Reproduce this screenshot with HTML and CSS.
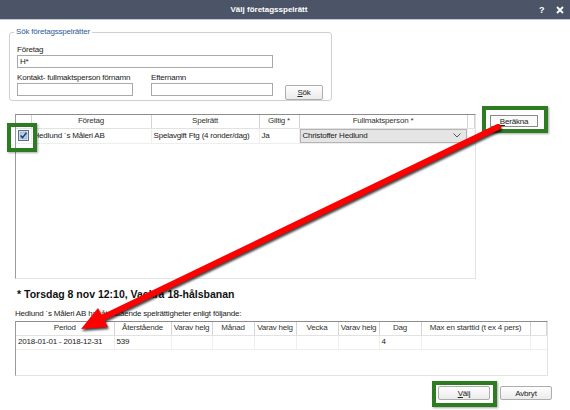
FILE: index.html
```html
<!DOCTYPE html>
<html lang="sv">
<head>
<meta charset="utf-8">
<title>Välj företagsspelrätt</title>
<link rel="stylesheet" href="styles.css">
</head>
<body>
<div class="titlebar">
  <div class="title">Välj företagsspelrätt</div>
  <div class="tb-btns">
    <span class="tb-help">?</span>
    <svg class="tb-close" width="8" height="8" viewBox="0 0 8 8"><path d="M1 1L7 7M7 1L1 7" stroke="#fff" stroke-width="1.8"/></svg>
  </div>
</div>

<fieldset class="search">
  <legend>Sök företagsspelrätter</legend>
  <div class="search-grid">
    <label class="lbl lbl-co">Företag</label>
    <div class="input in-co">H*</div>
    <label class="lbl lbl-fn">Kontakt- fullmaktsperson förnamn</label>
    <label class="lbl lbl-ln">Efternamn</label>
    <div class="input in-fn"></div>
    <div class="input in-ln"></div>
    <button class="btn sok"><u>S</u>ök</button>
  </div>
</fieldset>

<div class="top-area">
  <div class="grid-wrap top-grid">
    <table class="grid">
      <colgroup>
        <col style="width:15px"><col style="width:120px"><col style="width:108px"><col style="width:40px"><col style="width:168px"><col>
      </colgroup>
      <thead>
        <tr><th></th><th>Företag</th><th>Spelrätt</th><th>Giltig *</th><th>Fullmaktsperson *</th><th></th></tr>
      </thead>
      <tbody>
        <tr>
          <td class="cb-cell">
            <svg class="cb" width="11" height="11" viewBox="0 0 11 11">
              <rect x="0.5" y="0.5" width="10" height="10" fill="#f4f4f4" stroke="#5d6f8a"/>
              <rect x="2" y="2" width="7" height="7" fill="#b9d1ea" stroke="#7e9fc6" stroke-width="0.6"/>
              <path d="M2.6 5.4L4.6 7.6L8.4 2.8" fill="none" stroke="#1b3c73" stroke-width="1.5"/>
            </svg>
          </td>
          <td>Hedlund ´s Måleri AB</td>
          <td>Spelavgift Ftg (4 ronder/dag)</td>
          <td>Ja</td>
          <td class="combo-cell">
            <div class="combo">
              <span>Christoffer Hedlund</span>
              <svg width="8" height="5" viewBox="0 0 8 5"><path d="M0.5 0.5L4 4L7.5 0.5" fill="none" stroke="#555" stroke-width="1"/></svg>
            </div>
          </td>
          <td></td>
        </tr>
      </tbody>
    </table>
  </div>
  <button class="btn berakna"><u>B</u>eräkna</button>
</div>

<h2 class="slot">* Torsdag 8 nov 12:10, Vackra 18-hålsbanan</h2>
<p class="info">Hedlund ´s Måleri AB har återstående spelrättigheter enligt följande:</p>

<div class="grid-wrap bottom-grid">
  <table class="grid">
    <colgroup>
      <col style="width:98px"><col style="width:57px"><col style="width:41px"><col style="width:42px"><col style="width:42px"><col style="width:42px"><col style="width:41px"><col style="width:42px"><col style="width:109px"><col>
    </colgroup>
    <thead>
      <tr><th>Period</th><th>Återstående</th><th>Varav helg</th><th>Månad</th><th>Varav helg</th><th>Vecka</th><th>Varav helg</th><th>Dag</th><th>Max en starttid (t ex 4 pers)</th><th></th></tr>
    </thead>
    <tbody>
      <tr><td>2018-01-01 - 2018-12-31</td><td>539</td><td></td><td></td><td></td><td></td><td></td><td>4</td><td></td><td class="blank"></td></tr>
    </tbody>
  </table>
</div>

<div class="actions">
  <button class="btn act"><u>V</u>älj</button>
  <button class="btn act">Avbryt</button>
</div>

<div class="hl hl-cb"></div>
<div class="hl hl-ber"></div>
<div class="hl hl-valj"></div>

<svg class="arrow" width="570" height="410" viewBox="0 0 570 410">
  <line x1="498" y1="127" x2="100" y2="319" stroke="#ff0000" stroke-width="6" stroke-linecap="round"/>
  <polygon points="81,329 108,327 98,308" fill="#ff0000"/>
</svg>
</body>
</html>
```

FILE: styles.css
```css
* { box-sizing: border-box; }

body {
  margin: 0;
  width: 570px;
  height: 410px;
  overflow: hidden;
  position: relative;
  background: #ffffff;
  font-family: "Liberation Sans", Arial, sans-serif;
  font-size: 8px;
  letter-spacing: -0.2px;
  color: #222;
}

.titlebar {
  height: 20px;
  background: #4b5567;
  border-bottom: 1px solid #c3cad3;
  display: flex;
  align-items: center;
  color: #fff;
}

.title {
  flex: 1;
  text-align: center;
  font-weight: bold;
  font-size: 8px;
  letter-spacing: 0;
  padding-left: 2px;
}

.tb-btns {
  width: 34px;
  display: flex;
  align-items: center;
  gap: 12px;
  padding-left: 3px;
}

.tb-help {
  font-weight: bold;
  font-size: 9px;
}

.search {
  margin: 6px 0 0 9px;
  width: 323px;
  border: 1px solid #cfcfcf;
  border-radius: 3px;
  padding: 6px 7px 4px 7px;
}

.search legend {
  color: #2f5b9a;
  padding: 0 2px;
  margin-left: -3px;
  line-height: 12px;
}

.search-grid {
  display: grid;
  grid-template-columns: 116px 18px 122px 12px 38px;
  grid-template-rows: 11px 13px 15px 13px;
  align-items: start;
}

.lbl {
  display: block;
  line-height: 11px;
  color: #222;
  white-space: nowrap;
}

.lbl-co { grid-column: 1 / 4; grid-row: 1; }
.in-co { grid-column: 1 / 4; grid-row: 2; }
.lbl-fn { grid-column: 1 / 3; grid-row: 3; align-self: end; }
.lbl-ln { grid-column: 3 / 5; grid-row: 3; align-self: end; }
.in-fn { grid-column: 1 / 2; grid-row: 4; }
.in-ln { grid-column: 3 / 4; grid-row: 4; }

.input {
  height: 13px;
  border: 1px solid #a9a9a9;
  background: #fff;
  line-height: 11px;
  padding-left: 2px;
}

.btn {
  font-family: inherit;
  font-size: inherit;
  letter-spacing: inherit;
  color: #222;
  background: linear-gradient(#fefefe, #ebebeb);
  border: 1px solid #adadad;
  border-radius: 2px;
  padding: 0;
  line-height: 11px;
}

.sok {
  grid-column: 5 / 6;
  grid-row: 4;
  height: 15px;
  margin-top: 2px;
}

.top-area {
  display: flex;
  align-items: flex-start;
  gap: 14px;
  margin: 13px 0 0 15px;
}

.grid-wrap {
  border-top: 1px solid #8c8c8c;
  border-left: 1px solid #9a9a9a;
  border-right: 1px solid #e3e3e3;
  border-bottom: 1px solid #e3e3e3;
  background: #fff;
}

.top-grid {
  width: 461px;
  height: 165px;
}

.grid {
  width: 100%;
  table-layout: fixed;
  border-collapse: collapse;
}

.grid th {
  height: 13px;
  font-weight: normal;
  text-align: center;
  color: #333;
  border-right: 1px solid #d4d4d4;
  border-bottom: 1px solid #e2e2e2;
  padding: 0;
  white-space: nowrap;
  overflow: hidden;
  line-height: 12px;
}

.grid td {
  height: 14px;
  padding: 0 0 0 2px;
  border-right: 1px solid #eeeeee;
  border-bottom: 1px solid #eeeeee;
  white-space: nowrap;
  overflow: hidden;
  line-height: 12px;
}

.grid td.cb-cell { padding: 0 0 0 2px; }
.cb { display: block; }

.grid td.combo-cell { padding: 0; }

.combo {
  display: flex;
  align-items: center;
  justify-content: space-between;
  height: 14px;
  background: #e5e5e5;
  border: 1px solid #b4b4b4;
  padding: 0 5px 0 2px;
}

.berakna {
  width: 48px;
  height: 12px;
  margin-top: 1px;
  border-color: #8a8a8a;
  border-radius: 0;
  background: #fafafa;
}

.slot {
  margin: 8px 0 0 17px;
  font-size: 10.5px;
  letter-spacing: 0;
  font-weight: bold;
  line-height: 14px;
  color: #111;
}

.info {
  margin: 7px 0 0 15px;
  line-height: 12px;
}

.bottom-grid {
  width: 533px;
  height: 55px;
  margin: 1px 0 0 15px;
}

.bottom-grid td.blank { border-right: none; }

.actions {
  display: flex;
  justify-content: flex-end;
  gap: 10px;
  margin: 10px 18px 0 0;
}

.act {
  width: 52px;
  height: 14px;
}

.hl {
  position: absolute;
  border: 4px solid #2e7c22;
  box-shadow: 1px 1px 2px rgba(0, 0, 0, 0.35);
}

.hl-cb { left: 7px; top: 123px; width: 30px; height: 29px; }
.hl-ber { left: 482px; top: 106px; width: 66px; height: 27px; }
.hl-valj { left: 432px; top: 381px; width: 65px; height: 26px; }

.arrow {
  position: absolute;
  left: 0;
  top: 0;
  pointer-events: none;
  filter: drop-shadow(1px 2px 1px rgba(0, 0, 0, 0.75));
}
```
